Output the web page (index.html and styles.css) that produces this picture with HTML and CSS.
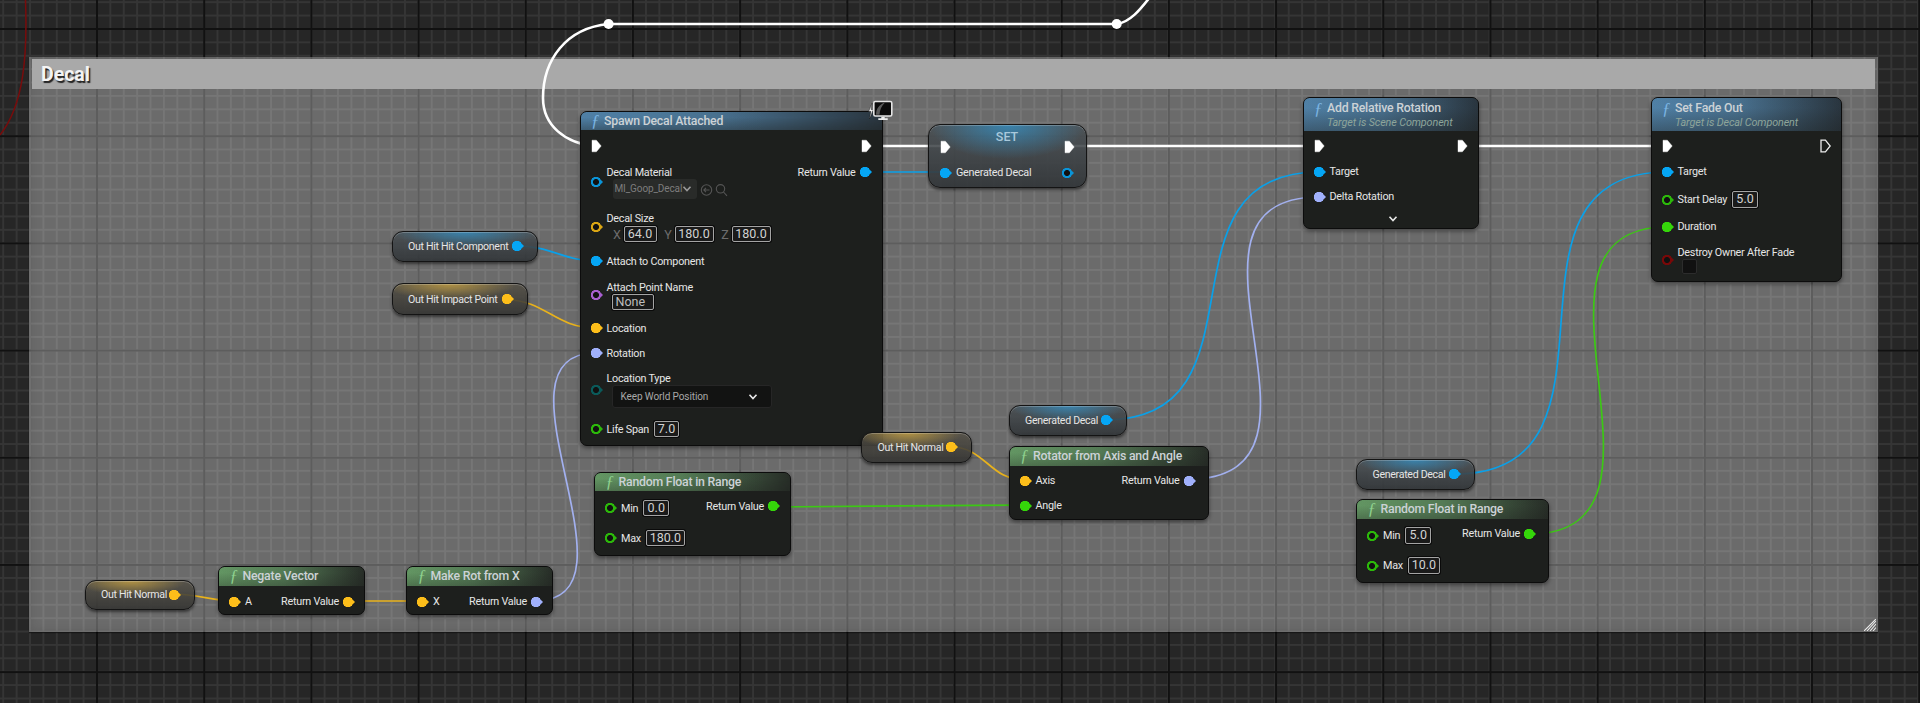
FILE: index.html
```html
<!DOCTYPE html>
<html lang="en">
<head>
<meta charset="utf-8">
<title>Decal</title>
<link rel="stylesheet" href="styles.css">
</head>
<body>
<svg class="defs" width="0" height="0" aria-hidden="true">
  <symbol id="exec" viewBox="0 0 11 14"><path d="M1 1.200h4.400l4.800 5.800-4.800 5.800H1z"/></symbol>
  <symbol id="chev" viewBox="0 0 10 8"><path d="M1.500 1.800 5 5.600l3.500-3.800" fill="none" stroke-width="1.600"/></symbol>
</svg>
<main class="canvas">
  <section class="frame">
    <h1 class="frame-title">Decal</h1>
    <svg class="grip" viewBox="0 0 12 12" aria-hidden="true">
      <path d="M0 12 12 0M3 12 12 2M6 12 12 5M9 12l3-3.500"/>
    </svg>
  </section>

  <svg class="wires" viewBox="0 0 1920 703" aria-hidden="true">
    <path class="w red" d="M25.500 0C27.500 55 24 105 0 135"/>
    <g class="w white">
      <path d="M1117 24C1130 22 1140 10 1150 -3"/>
      <path d="M608.600 24H1117"/>
      <path d="M608.600 24C566 28 543 60 543 98C543 125 565 144 596 146"/>
      <path d="M865 146H945M1068 146H1318M1462 146H1667"/>
    </g>
    <circle class="knot" cx="608.600" cy="24" r="5"/>
    <circle class="knot" cx="1116.700" cy="24" r="5"/>
    <g class="w blue">
      <path d="M863 172H945"/>
      <path d="M517.500 246C550 246 565 261 596 261"/>
      <path d="M1105 420C1275 420 1149 172 1319 172"/>
      <path d="M1455 474C1645 474 1477 172 1667 172"/>
    </g>
    <g class="w yellow">
      <path d="M507 300C545 300 555 328 596 328"/>
      <path d="M175 594C195 594 215 601 234 601"/>
      <path d="M348 601H421"/>
      <path d="M951 447C985 447 990 480 1024 480"/>
    </g>
    <g class="w lav">
      <path d="M535 601C650 601 481 353 596 353"/>
      <path d="M1189 479C1359 479 1149 197 1319 197"/>
    </g>
    <g class="w green">
      <path d="M773 507C830 507 960 505 1024 505"/>
      <path d="M1530 534C1700 534 1497 227 1667 227"/>
    </g>
  </svg>

  <!-- Spawn Decal Attached -->
  <article class="node n-spawn">
    <header class="hdr fn-blue short"><i class="fn">ƒ</i><div class="title">Spawn Decal Attached</div></header>
    <div class="body">
      <div class="col">
        <div class="row r32"><svg class="exec"><use href="#exec"/></svg></div>
        <div class="row r39"><span class="pin hollow blue"></span>
          <div class="stack"><span class="lbl">Decal Material</span>
            <div class="asset"><span class="asset-name">MI_Goop_Decal</span>
              <svg class="chev dim"><use href="#chev"/></svg></div>
          </div>
          <svg class="asset-tools" viewBox="0 0 30 14" aria-hidden="true">
            <circle cx="6.500" cy="7" r="5.200"/><path d="M9.500 7H4M6 4.800 3.800 7 6 9.200"/>
            <circle cx="20.500" cy="5.800" r="4.200"/><path d="M23.500 9l3.500 3.800"/>
          </svg>
        </div>
        <div class="row r51"><span class="pin hollow yellow"></span>
          <div class="stack"><span class="lbl">Decal Size</span>
            <div class="vec"><span class="axis">X</span><span class="box w33">64.0</span><span class="axis">Y</span><span class="box w39">180.0</span><span class="axis">Z</span><span class="box w39">180.0</span></div>
          </div>
        </div>
        <div class="row r18"><span class="pin blue"></span><span class="lbl">Attach to Component</span></div>
        <div class="row r50"><span class="pin hollow purple"></span>
          <div class="stack"><span class="lbl">Attach Point Name</span><span class="box name">None</span></div>
        </div>
        <div class="row r16"><span class="pin yellow"></span><span class="lbl">Location</span></div>
        <div class="row r34"><span class="pin lav"></span><span class="lbl">Rotation</span></div>
        <div class="row r39"><span class="pin hollow teal"></span>
          <div class="stack"><span class="lbl">Location Type</span>
            <div class="combo"><span>Keep World Position</span><svg class="chev"><use href="#chev"/></svg></div>
          </div>
        </div>
        <div class="row r40"><span class="pin hollow green"></span><span class="lbl">Life Span</span><span class="box w25">7.0</span></div>
      </div>
      <div class="col out">
        <div class="row r32"><svg class="exec"><use href="#exec"/></svg></div>
        <div class="row r20"><span class="lbl">Return Value</span><span class="pin blue"></span></div>
      </div>
    </div>
    <svg class="badge" viewBox="0 0 25 21" aria-hidden="true">
      <path class="bolt" d="M4.200 3 .6 11.500h2.400L1.400 19l4-9.500H3z"/>
      <rect class="screen" x="5.800" y="1.500" width="18" height="14.500" rx="1.500"/>
      <path class="glare" d="M8 14.800C8 9 11 4.500 17 2.600 13.500 6 11.800 10 11.500 14.800z"/>
      <path class="stand" d="M13.300 16.800h3.400v1.400h3v1.800H10.300v-1.800h3z"/>
    </svg>
  </article>

  <!-- SET -->
  <article class="node var n-set tint-blue">
    <div class="set-title">SET</div>
    <div class="body set-body">
      <div class="col">
        <div class="row r24"><svg class="exec"><use href="#exec"/></svg></div>
        <div class="row r28"><span class="pin blue"></span><span class="lbl">Generated Decal</span></div>
      </div>
      <div class="col out">
        <div class="row r24"><svg class="exec"><use href="#exec"/></svg></div>
        <div class="row r28 nudge"><span class="pin hollow blue"></span></div>
      </div>
    </div>
  </article>

  <!-- Add Relative Rotation -->
  <article class="node n-addrot">
    <header class="hdr fn-blue tall"><i class="fn">ƒ</i><div><div class="title">Add Relative Rotation</div><div class="sub">Target is Scene Component</div></div></header>
    <div class="body">
      <div class="col">
        <div class="row r30"><svg class="exec"><use href="#exec"/></svg></div>
        <div class="row r22"><span class="pin blue"></span><span class="lbl">Target</span></div>
        <div class="row r28"><span class="pin lav"></span><span class="lbl">Delta Rotation</span></div>
      </div>
      <div class="col out">
        <div class="row r30"><svg class="exec"><use href="#exec"/></svg></div>
      </div>
    </div>
    <svg class="chev more"><use href="#chev"/></svg>
  </article>

  <!-- Set Fade Out -->
  <article class="node n-fade">
    <header class="hdr fn-blue tall"><i class="fn">ƒ</i><div><div class="title">Set Fade Out</div><div class="sub">Target is Decal Component</div></div></header>
    <div class="body">
      <div class="col">
        <div class="row r30"><svg class="exec"><use href="#exec"/></svg></div>
        <div class="row r22"><span class="pin blue"></span><span class="lbl">Target</span></div>
        <div class="row r34"><span class="pin hollow green"></span><span class="lbl">Start Delay</span><span class="box w26">5.0</span></div>
        <div class="row r20"><span class="pin green"></span><span class="lbl">Duration</span></div>
        <div class="row r46"><span class="pin hollow red"></span>
          <div class="stack"><span class="lbl">Destroy Owner After Fade</span><span class="check"></span></div>
        </div>
      </div>
      <div class="col out">
        <div class="row r30"><svg class="exec open"><use href="#exec"/></svg></div>
      </div>
    </div>
  </article>

  <!-- Getters -->
  <article class="node var n-hitcomp tint-blue"><span class="lbl">Out Hit Hit Component</span><span class="pin blue"></span></article>
  <article class="node var n-impact tint-yellow"><span class="lbl">Out Hit Impact Point</span><span class="pin yellow"></span></article>
  <article class="node var n-normal-a tint-yellow"><span class="lbl">Out Hit Normal</span><span class="pin yellow"></span></article>
  <article class="node var n-normal-b tint-yellow"><span class="lbl">Out Hit Normal</span><span class="pin yellow"></span></article>
  <article class="node var n-gen-a tint-blue"><span class="lbl">Generated Decal</span><span class="pin blue"></span></article>
  <article class="node var n-gen-b tint-blue"><span class="lbl">Generated Decal</span><span class="pin blue"></span></article>

  <!-- Pure functions -->
  <article class="node n-negate">
    <header class="hdr fn-green"><i class="fn">ƒ</i><div class="title">Negate Vector</div></header>
    <div class="body">
      <div class="col"><div class="row r32"><span class="pin yellow"></span><span class="lbl">A</span></div></div>
      <div class="col out tight"><div class="row r32"><span class="lbl">Return Value</span><span class="pin yellow"></span></div></div>
    </div>
  </article>

  <article class="node n-makerot">
    <header class="hdr fn-green"><i class="fn">ƒ</i><div class="title">Make Rot from X</div></header>
    <div class="body">
      <div class="col"><div class="row r32"><span class="pin yellow"></span><span class="lbl">X</span></div></div>
      <div class="col out tight"><div class="row r32"><span class="lbl">Return Value</span><span class="pin lav"></span></div></div>
    </div>
  </article>

  <article class="node n-rand-a">
    <header class="hdr fn-green"><i class="fn">ƒ</i><div class="title">Random Float in Range</div></header>
    <div class="body">
      <div class="col">
        <div class="row r34"><span class="pin hollow green"></span><span class="lbl">Min</span><span class="box w26">0.0</span></div>
        <div class="row r26"><span class="pin hollow green"></span><span class="lbl">Max</span><span class="box w39">180.0</span></div>
      </div>
      <div class="col out"><div class="row r30"><span class="lbl">Return Value</span><span class="pin green"></span></div></div>
    </div>
  </article>

  <article class="node n-rotator">
    <header class="hdr fn-green"><i class="fn">ƒ</i><div class="title">Rotator from Axis and Angle</div></header>
    <div class="body">
      <div class="col">
        <div class="row r30"><span class="pin yellow"></span><span class="lbl">Axis</span></div>
        <div class="row r20"><span class="pin green"></span><span class="lbl">Angle</span></div>
      </div>
      <div class="col out wide"><div class="row r30"><span class="lbl">Return Value</span><span class="pin lav"></span></div></div>
    </div>
  </article>

  <article class="node n-rand-b">
    <header class="hdr fn-green"><i class="fn">ƒ</i><div class="title">Random Float in Range</div></header>
    <div class="body">
      <div class="col">
        <div class="row r34"><span class="pin hollow green"></span><span class="lbl">Min</span><span class="box w26">5.0</span></div>
        <div class="row r26"><span class="pin hollow green"></span><span class="lbl">Max</span><span class="box w32">10.0</span></div>
      </div>
      <div class="col out wide"><div class="row r30"><span class="lbl">Return Value</span><span class="pin green"></span></div></div>
    </div>
  </article>
</main>
</body>
</html>
```

FILE: styles.css
```css
* { box-sizing: border-box; }
html, body { margin: 0; height: 100%; }
body { background: #262626; overflow: hidden; font-family: Roboto, "Liberation Sans", sans-serif; color: #e6e6e6; }
.defs { position: absolute; }

/* ---------- graph canvas ---------- */
.canvas {
  position: relative;
  width: 1920px;
  height: 703px;
  overflow: hidden;
  background-color: #262626;
  background-image:
    linear-gradient(90deg, #111 1.5px, transparent 1.5px),
    linear-gradient(180deg, #111 1.5px, transparent 1.5px),
    linear-gradient(90deg, #353535 1.800px, transparent 1.800px),
    linear-gradient(180deg, #353535 1.800px, transparent 1.800px);
  background-size: 107.2px 107.2px, 107.2px 107.2px, 13.4px 13.4px, 13.4px 13.4px;
  background-position: 96px 28px, 96px 28px, 96px 28px, 96px 28px;
}

/* ---------- comment frame ---------- */
.frame {
  position: absolute;
  left: 29px; top: 57px;
  width: 1849px; height: 575px;
  padding: 1.500px 3px 0;
  background: rgba(255, 255, 255, .32);
  box-shadow: inset 0 0 12px rgba(0, 0, 0, .14), 0 1px 1px rgba(0, 0, 0, .5);
}
.frame-title {
  margin: 0;
  height: 30.500px;
  padding-left: 9px;
  background: #a9a9a9;
  font: 700 19.500px/31px Roboto, sans-serif;
  color: #f4f4f4;
  text-shadow: 1.500px 1.500px 1px #222;
}
.grip {
  position: absolute;
  right: 2px; bottom: 1px;
  width: 12px; height: 12px;
  stroke: #eee; stroke-width: 1.100; fill: none;
}

/* ---------- wires ---------- */
.wires { position: absolute; inset: 0; width: 1920px; height: 703px; }
.w { fill: none; stroke-width: 1.700; }
.w.white { stroke: #fff; stroke-width: 2.600; }
.w.red { stroke: #780c0c; stroke-width: 1.500; }
.w.blue { stroke: #0aa0e8; }
.w.yellow { stroke: #e8b21c; }
.w.lav { stroke: #a2b0ef; }
.w.green { stroke: #3cc814; }
.knot { fill: #fff; }

/* ---------- nodes ---------- */
.node {
  position: absolute;
  border: 1.500px solid #0c0c0c;
  border-radius: 7px;
  background: #1d1f1d;
  box-shadow: 0 2px 4px rgba(0, 0, 0, .45);
}
.n-spawn  { left: 579.500px; top: 110.500px; width: 303px; height: 335.500px; }
.n-set    { left: 927.500px; top: 123.500px; width: 159px; height: 64px; }
.n-addrot { left: 1302.500px; top: 96.500px; width: 176px; height: 132px; }
.n-fade   { left: 1650.500px; top: 96.500px; width: 191px; height: 185.500px; }
.n-hitcomp { left: 391.500px; top: 230.500px; width: 146px; height: 31.500px; }
.n-impact  { left: 391.500px; top: 283px; width: 136.500px; height: 32px; }
.n-normal-a { left: 84.500px; top: 579.500px; width: 110.500px; height: 30.500px; }
.n-normal-b { left: 861px; top: 432px; width: 110.500px; height: 30.500px; }
.n-gen-a  { left: 1008.500px; top: 404.500px; width: 118.500px; height: 31.500px; }
.n-gen-b  { left: 1356px; top: 458.500px; width: 118.500px; height: 31px; }
.n-negate  { left: 218px; top: 566px; width: 147px; height: 49px; }
.n-makerot { left: 406px; top: 566px; width: 147px; height: 49px; }
.n-rand-a  { left: 594px; top: 471.500px; width: 197px; height: 84.500px; }
.n-rotator { left: 1008.500px; top: 446px; width: 200px; height: 73.500px; }
.n-rand-b  { left: 1356px; top: 499px; width: 193px; height: 84px; }

.hdr {
  display: flex;
  align-items: center;
  height: 18.500px;
  padding-left: 10.500px;
  border-radius: 5.500px 5.500px 0 0;
}
.hdr.short { height: 18.500px; }
.hdr.tall { height: 33px; align-items: flex-start; padding-top: 2px; }
.fn-blue  { background: linear-gradient(180deg, rgba(29,31,29,.05) 30%, rgba(29,31,29,.4)), linear-gradient(90deg, #5285ad 0%, #4b7595 45%, #2a3640 100%); }
.fn-green { background: linear-gradient(180deg, rgba(29,31,29,.02) 30%, rgba(29,31,29,.3)), linear-gradient(90deg, #649864 0%, #557c56 45%, #272d27 100%); }
.fn {
  width: 13px;
  font: italic 17px/18px "Liberation Serif", serif;
  color: #7bb4e2;
}
.fn-green .fn { color: #8ed08e; }
.title { font-size: 12.300px; font-weight: 500; line-height: 16px; letter-spacing: -.22px; color: #ccd2d6; white-space: nowrap; }
.sub { font-size: 10.800px; font-style: italic; line-height: 14px; letter-spacing: -.12px; color: #8ea59a; white-space: nowrap; }

.body { display: flex; justify-content: space-between; }
.col { display: flex; flex-direction: column; padding-left: 10px; }
.col.out { padding: 0 10px 0 0; align-items: flex-end; }
.col.out.tight { padding-right: 9px; }
.col.out.wide { padding-right: 12px; }
.row { display: flex; align-items: center; gap: 4px; white-space: nowrap; }
.r16 { height: 16px; } .r18 { height: 18px; } .r20 { height: 20px; }
.r22 { height: 22px; } .r24 { height: 24px; } .r26 { height: 26px; }
.r28 { height: 28px; } .r30 { height: 30px; } .r32 { height: 32px; }
.r34 { height: 34px; } .r39 { height: 39px; } .r40 { height: 40px; }
.r46 { height: 46px; } .r50 { height: 50px; } .r51 { height: 51px; }

.lbl { padding-top: 1px; font-size: 10.800px; line-height: 14px; letter-spacing: -.25px; color: #e6e6e6; white-space: nowrap; }
.stack { display: flex; flex-direction: column; align-items: flex-start; }

/* pins */
.pin {
  position: relative;
  flex: none;
  width: 12px; height: 10px;
  background: radial-gradient(circle at 5px 5px, currentColor 5px, transparent 5.300px);
}
.pin::after {
  content: "";
  position: absolute;
  right: 0; top: 3px;
  border-left: 2.500px solid currentColor;
  border-top: 2px solid transparent;
  border-bottom: 2px solid transparent;
}
.pin.hollow { background: radial-gradient(circle at 5px 5px, #111 2.800px, currentColor 3.100px, currentColor 5px, transparent 5.300px); }
.pin.blue { color: #05a6f5; }
.pin.yellow { color: #fdbe1a; }
.pin.lav { color: #a0b0fb; }
.pin.green { color: #35d60a; }
.pin.hollow.blue { color: #0a94d8; }
.pin.hollow.yellow { color: #d9a514; }
.pin.hollow.green { color: #2cb80a; }
.pin.purple { color: #a85fd0; }
.pin.teal { color: #0a5a5a; }
.pin.red { color: #780808; }

.exec { width: 11px; height: 14px; fill: #fff; stroke: #fff; stroke-width: .4; }
.exec.open { fill: #1d1f1d; stroke: #eee; stroke-width: 1.300; }

/* value inputs */
.box {
  display: inline-block;
  height: 16.500px;
  border: 1.200px solid #a4a4a4;
  border-radius: 2px;
  background: #1a1a1a;
  box-shadow: 0 0 0 1px #0a0a0a;
  font-size: 12.500px;
  line-height: 14px;
  text-align: center;
  color: #d2d2d2;
}
.row > .box { margin-left: 1px; }
.w25 { width: 25px; } .w26 { width: 26px; } .w32 { width: 32px; }
.w33 { width: 33px; } .w39 { width: 39px; }
.box.name { width: 42px; height: 16px; margin: -1px 0 0 5px; text-align: left; padding-left: 3px; color: #bdbdbd; }
.vec { display: flex; align-items: center; gap: 2px; margin: 0 0 0 6px; }
.axis { width: 9px; font-size: 12.500px; color: #6d6d6d; text-align: center; }
.vec .box + .axis { margin-left: 5px; }

.asset {
  display: flex; align-items: center; justify-content: space-between;
  width: 84px; height: 20px;
  margin: -1px 0 0 6px;
  padding: 0 5px 0 2px;
  border-radius: 3px;
  background: rgba(255, 255, 255, .055);
}
.asset-name { font-size: 10px; letter-spacing: -.12px; color: #7d7d7d; }
.chev { flex: none; width: 10px; height: 8px; stroke: #e8e8e8; }
.chev.dim { stroke: #9a9a9a; }
.asset-tools {
  align-self: flex-end;
  width: 30px; height: 14px;
  margin: 0 0 4px -1px;
  fill: none; stroke: #555; stroke-width: 1.100;
}
.combo {
  display: flex; align-items: center; justify-content: space-between;
  width: 160px; height: 23px;
  margin: -1px 0 0 5px;
  padding: 0 13px 0 8px;
  border: 1px solid #262626;
  border-radius: 3px;
  background: #121312;
  font-size: 10px;
  letter-spacing: -.1px;
  color: #a8a8a8;
}
.check {
  width: 15px; height: 15px;
  margin: -1px 0 0 4px;
  border: 1px solid #2c2c2c;
  border-radius: 2px;
  background: #111;
}
.more { position: absolute; left: 84px; bottom: 5px; }

.badge { position: absolute; left: 287px; top: -12px; width: 25px; height: 21px; }
.bolt { fill: #f0f0f0; stroke: #111; stroke-width: .4; }
.screen { fill: #0b0b0b; stroke: #e4e4e4; stroke-width: 1.600; }
.glare { fill: #5a5a5a; }
.stand { fill: #eee; }

/* variable pills */
.var {
  display: flex; align-items: center; justify-content: space-between;
  padding: 0 13px 0 15.500px;
  border-radius: 11px;
  border-color: #141414;
  box-shadow: 0 2px 3px rgba(0, 0, 0, .5), inset 0 1px 0 rgba(255, 255, 255, .22);
}
.var > .lbl { font-size: 10.600px; letter-spacing: -.3px; }
.tint-blue {
  background:
    radial-gradient(ellipse 50% 55% at 50% 0, rgba(45, 160, 225, .62), transparent 100%),
    linear-gradient(180deg, rgba(74, 80, 84, .88), rgba(48, 52, 55, .9));
}
.tint-yellow {
  background:
    radial-gradient(ellipse 50% 52% at 42% 0, rgba(225, 180, 65, .65), transparent 100%),
    linear-gradient(180deg, rgba(84, 80, 70, .88), rgba(50, 50, 48, .88));
}
.n-set { display: block; padding: 0; border-radius: 12px; }
.set-title { height: 24px; font: 500 12.500px/24px Roboto, sans-serif; text-align: center; color: #a9c9dc; }
.set-body { margin-top: -14px; }
.n-set .col { padding-left: 11.500px; }
.n-set .col.out { padding: 0 10.500px 0 0; }
.nudge { padding-right: 1px; }
```
